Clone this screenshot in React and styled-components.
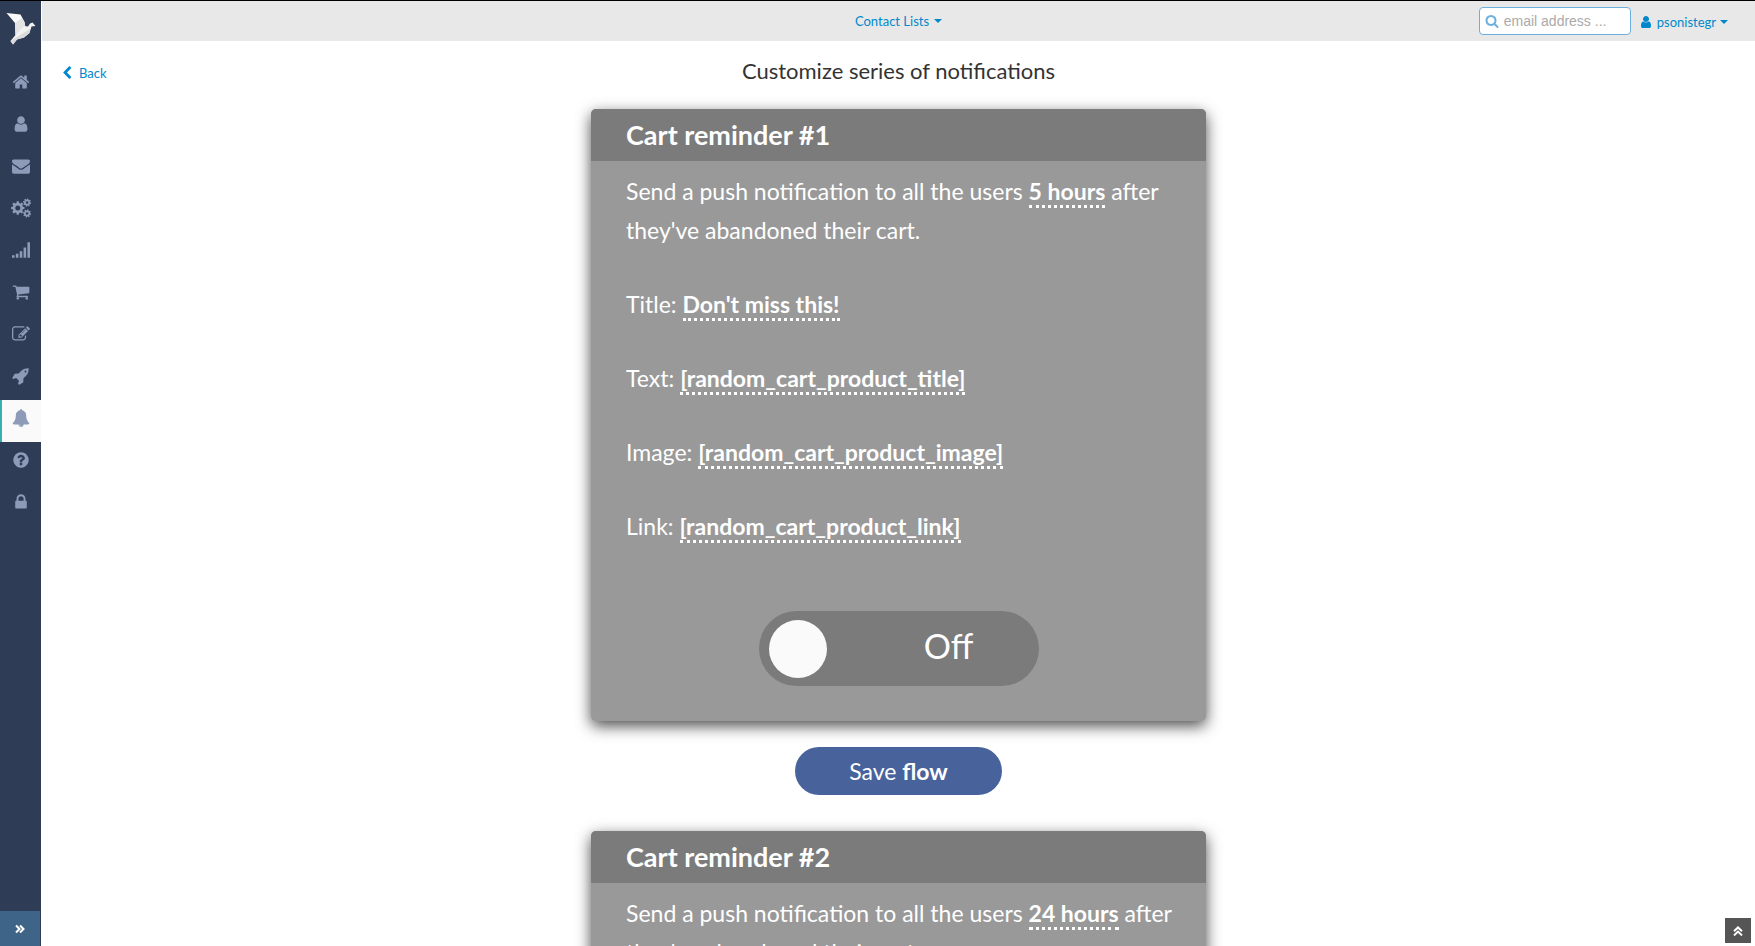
import React from "react";
import styled, { createGlobalStyle, css } from "styled-components";

const GlobalStyle = createGlobalStyle`
  *, *::before, *::after { box-sizing: border-box; }
  body {
    margin: 0;
    background: #fff;
    color: #333;
    font-family: Lato, "Liberation Sans", sans-serif;
    font-size: 13px;
  }
`;

/* ---------- icons ---------- */

const Glyph = styled.svg`
  display: block;
  flex: none;
  width: ${(p) => p.$size}px;
  height: ${(p) => p.$size}px;
  fill: currentColor;
`;

const PATHS = {
  home: "M1472 992v480q0 26-19 45t-45 19h-384v-384h-256v384h-384q-26 0-45-19t-19-45v-480q0-1 .5-3t.5-3l575-474 575 474q1 2 1 6zm223-69l-62 74q-8 9-21 11h-3q-13 0-21-7l-692-577-692 577q-12 8-24 7-13-2-21-11l-62-74q-8-10-7-23.5t11-21.5l719-599q32-26 76-26t76 26l244 204v-195q0-14 9-23t23-9h192q14 0 23 9t9 23v408l219 182q10 8 11 21.5t-7 23.5z",
  user: "M1536 1399q0 109-62.5 187t-150.5 78h-854q-88 0-150.5-78t-62.5-187q0-85 8.5-160.5t31.5-152 58.5-131 94-89 134.5-34.5q131 128 313 128t313-128q76 0 134.5 34.5t94 89 58.5 131 31.5 152 8.5 160.5zm-256-887q0 159-112.5 271.5t-271.5 112.5-271.5-112.5-112.5-271.5 112.5-271.5 271.5-112.5 271.5 112.5 112.5 271.5z",
  envelope: "M1792 710v794q0 66-47 113t-113 47h-1472q-66 0-113-47t-47-113v-794q44 49 101 87 362 246 497 345 57 42 92.5 65.5t94.5 48 110 24.5h2q51 0 110-24.5t94.5-48 92.5-65.5q170-123 498-345 57-39 100-87zm0-294q0 79-49 151t-122 123q-376 261-468 325-10 7-42.5 31t-54 38.5-52 32.5-57.5 27-50 9h-2q-23 0-50-9t-57.5-27-52-32.5-54-38.5-42.5-31q-91-64-262-182.5t-205-142.5q-62-42-117-115.5t-55-136.5q0-78 41.5-130t118.5-52h1472q65 0 112.5 47t47.5 113z",
  signal: "M0 1408h256v256h-256zM384 1280h256v384h-256zM768 1024h256v640h-256zM1152 640h256v1024h-256zM1536 128h256v1536h-256z",
  cart: "M704 1536q0 52-38 90t-90 38-90-38-38-90 38-90 90-38 90 38 38 90zm896 0q0 52-38 90t-90 38-90-38-38-90 38-90 90-38 90 38 38 90zm128-1088v512q0 24-16.5 42.5t-40.5 21.5l-1044 122q13 60 13 70 0 16-24 64h920q26 0 45 19t19 45-19 45-45 19h-1024q-26 0-45-19t-19-45q0-11 8-31.5t16-36 21.5-40 15.5-29.5l-177-823h-204q-26 0-45-19t-19-45 19-45 45-19h256q16 0 28.5 6.5t19.5 15.5 13 24.5 8 26 5.5 29.5 4.5 26h1201q26 0 45 19t19 45z",
  edit: "M888 1184l116-116-152-152-116 116v56h96v96h56zm440-720q-16-16-33 1l-350 350q-17 17-1 33t33-1l350-350q17-17 1-33zm80 594v190q0 119-84.5 203.5t-203.5 84.5h-832q-119 0-203.5-84.5t-84.5-203.5v-832q0-119 84.5-203.5t203.5-84.5h832q63 0 117 25 15 7 18 23 3 17-9 29l-49 49q-14 14-32 8-23-6-45-6h-832q-66 0-113 47t-47 113v832q0 66 47 113t113 47h832q66 0 113-47t47-113v-126q0-13 9-22l64-64q15-15 35-7t20 29zm-96-738l288 288-672 672h-288v-288zm444 132l-92 92-288-288 92-92q28-28 68-28t68 28l152 152q28 28 28 68t-28 68z",
  rocket: "M1440 448q0-40-28-68t-68-28-68 28-28 68 28 68 68 28 68-28 28-68zm224-288q0 249-75.5 430.5t-253.5 360.5q-81 80-195 176l-20 379q-2 16-16 26l-384 224q-7 4-16 4-12 0-23-9l-64-64q-13-14-8-32l85-276-281-281-276 85q-3 1-9 1-14 0-23-9l-64-64q-17-19-5-39l224-384q10-14 26-16l379-20q96-114 176-195 188-187 358-258t431-71q14 0 24 9.5t10 22.5z",
  bell: "M912 1696q0-16-16-16-59 0-101.5-42.5t-42.5-101.5q0-16-16-16t-16 16q0 73 51.5 124.5t124.5 51.5q16 0 16-16zm816-288q0 52-38 90t-90 38h-448q0 106-75 181t-181 75-181-75-75-181h-448q-52 0-90-38t-38-90q50-42 91-88t85-119.5 74.5-158.5 50-206 19.5-260q0-152 117-282.5t307-158.5q-8-19-8-39 0-40 28-68t68-28 68 28 28 68q0 20-8 39 190 28 307 158.5t117 282.5q0 139 19.5 260t50 206 74.5 158.5 85 119.5 91 88z",
  help: "M1024 1376v-192q0-14-9-23t-23-9h-192q-14 0-23 9t-9 23v192q0 14 9 23t23 9h192q14 0 23-9t9-23zm256-672q0-88-55.5-163t-138.5-116-170-41q-243 0-371 213-15 24 8 42l132 100q7 6 19 6 16 0 25-12 53-68 86-92 34-24 86-24 48 0 85.5 26t37.5 59q0 38-20 61t-68 45q-63 28-115.5 86.5t-52.5 125.5v36q0 14 9 23t23 9h192q14 0 23-9t9-23q0-19 21.5-49.5t54.5-49.5q32-18 49-28.5t46-35 44.5-48 28-60.5 12.5-81zm384 192q0 209-103 385.5t-279.5 279.5-385.5 103-385.5-103-279.5-279.5-103-385.5 103-385.5 279.5-279.5 385.5-103 385.5 103 279.5 279.5 103 385.5z",
  lock: "M640 768h512v-192q0-106-75-181t-181-75-181 75-75 181v192zm832 96v576q0 40-28 68t-68 28h-960q-40 0-68-28t-28-68v-576q0-40 28-68t68-28h32v-192q0-184 132-316t316-132 316 132 132 316v192h32q40 0 68 28t28 68z",
  search: "M1216 832q0-185-131.5-316.5t-316.5-131.5-316.5 131.5-131.5 316.5 131.5 316.5 316.5 131.5 316.5-131.5 131.5-316.5zm512 832q0 52-38 90t-90 38q-54 0-90-38l-343-342q-179 124-399 124-143 0-273.5-55.5t-225-150-150-225-55.5-273.5 55.5-273.5 150-225 225-150 273.5-55.5 273.5 55.5 225 150 150 225 55.5 273.5q0 220-124 399l343 343q37 37 37 90z",
  back: "M1427 301l-531 531 531 531q19 19 19 45t-19 45l-166 166q-19 19-45 19t-45-19l-742-742q-19-19-19-45t19-45l742-742q19-19 45-19t45 19l166 166q19 19 19 45t-19 45z",
};

/* A toothed wheel with a round hole, as an even-odd path. */
const gear = (cx, cy, outer, inner, hole, teeth = 8, turn = 0) => {
  const step = (Math.PI * 2) / teeth;
  const at = (r, a) =>
    `${Math.round(cx + r * Math.cos(a))} ${Math.round(cy + r * Math.sin(a))}`;
  const points = [];
  for (let i = 0; i < teeth; i += 1) {
    const a = i * step + turn;
    points.push(
      at(inner, a - step * 0.32),
      at(outer, a - step * 0.2),
      at(outer, a + step * 0.2),
      at(inner, a + step * 0.32)
    );
  }
  return `M${points.join("L")}ZM${cx - hole} ${cy}a${hole} ${hole} 0 1 0 ${hole * 2} 0a${hole} ${hole} 0 1 0 ${-hole * 2} 0Z`;
};

PATHS.gears = [
  gear(576, 896, 680, 520, 250),
  gear(1500, 350, 410, 310, 130, 8, 0.2),
  gear(1500, 1442, 410, 310, 130, 8, 0.2),
].join("");

const Icon = ({ name, size = 18 }) => (
  <Glyph $size={size} viewBox="0 0 1792 1792" overflow="visible" fillRule="evenodd" aria-hidden="true">
    <path d={PATHS[name]} />
  </Glyph>
);

const DoubleChevronSvg = styled.svg`
  display: block;
  width: 10px;
  height: 10px;
  fill: none;
  stroke: currentColor;
  stroke-width: 2;
`;

const DoubleChevron = ({ up }) => (
  <DoubleChevronSvg viewBox="0 0 10 10" aria-hidden="true">
    <path d={up ? "M1 5.2 5 1.4 9 5.2M1 9.4 5 5.6 9 9.4" : "M1 1.500 4.500 5 1 8.500M5 1.500 8.500 5 5 8.500"} />
  </DoubleChevronSvg>
);

const Caret = styled.span`
  border: 4px solid transparent;
  border-top-color: currentColor;
  border-bottom: 0;
`;

/* ---------- sidebar ---------- */

const Shell = styled.div`
  display: flex;
  height: 100vh;
  border-top: 1px solid #000;
  overflow: hidden;
`;

const Sidebar = styled.nav`
  display: flex;
  flex-direction: column;
  flex: none;
  width: 41px;
  background: #2f3c56;
`;

const LogoLink = styled.a`
  display: block;
  height: 63px;
  padding: 10px 0 0 4px;
`;

const LogoSvg = styled.svg`
  display: block;
  width: 34px;
  height: 36px;
`;

const NavLink = styled.a`
  display: flex;
  justify-content: center;
  height: 42px;
  padding-top: 9px;
  color: #8d9bb8;
  ${(p) =>
    p.$active &&
    css`
      background: #fafafa;
      box-shadow: inset 2px 0 #36b0b0;
    `}
`;

const ExpandButton = styled.button`
  display: flex;
  align-items: center;
  justify-content: center;
  width: 40px;
  height: 35px;
  margin-top: auto;
  padding: 0;
  border: 0;
  background: #3e6588;
  color: #fff;
`;

/* ---------- top bar ---------- */

const Page = styled.div`
  display: flex;
  flex-direction: column;
  flex: 1;
  min-width: 0;
  border-left: 1px solid #fff;
`;

const TopBar = styled.header`
  display: grid;
  grid-template-columns: 1fr auto 1fr;
  align-items: center;
  flex: none;
  height: 40px;
  padding: 0 27px;
  background: #e8e8e8;
`;

const TextLink = styled.a`
  display: inline-flex;
  align-items: center;
  gap: ${(p) => p.$gap}px;
  color: #08c;
  font-size: 13px;
  line-height: 20px;
  text-decoration: none;
`;

const MenuLink = styled(TextLink)`
  grid-column: 2;
`;

const AccountLink = styled(TextLink)`
  padding-top: 2px;
`;

const Account = styled.div`
  display: flex;
  align-items: center;
  justify-content: flex-end;
  gap: 8px;
`;

const SearchBox = styled.label`
  display: flex;
  align-items: center;
  gap: 5px;
  width: 152px;
  height: 28px;
  padding: 0 5px;
  border: 1px solid #6cb0de;
  border-radius: 4px;
  background: #fff;
  color: #6cb0de;
`;

const SearchInput = styled.input`
  flex: 1;
  min-width: 0;
  padding: 0;
  border: 0;
  outline: 0;
  background: none;
  color: #555;
  font: 14px/20px "Liberation Sans", sans-serif;
  &::placeholder { color: #aaa; }
`;

/* ---------- content ---------- */

const Content = styled.main`
  flex: 1;
  min-height: 0;
  overflow-y: auto;
  scrollbar-width: none;
`;

const TitleRow = styled.div`
  display: grid;
  grid-template-columns: 1fr auto 1fr;
  align-items: center;
  height: 60px;
  margin-bottom: 8px;
  padding: 0 18px;
`;

const BackLink = styled(TextLink)`
  justify-self: start;
  padding-top: 4px;
`;

const PageTitle = styled.h1`
  margin: 0;
  color: #333;
  font-size: 22px;
  font-weight: 400;
  line-height: 30px;
`;

const Flow = styled.div`
  display: flex;
  flex-direction: column;
  align-items: center;
`;

const Card = styled.section`
  width: 100%;
  max-width: 615px;
  border-radius: 5px;
  background: #999;
  box-shadow: 0 5px 15px rgba(0, 0, 0, 0.7);
  color: #fff;
`;

const CardTitle = styled.h2`
  margin: 0;
  padding: 0 35px;
  border-radius: 5px 5px 0 0;
  background: #7b7b7b;
  font-size: 27px;
  font-weight: 700;
  line-height: 52px;
`;

const CardBody = styled.div`
  padding: 11px 24px 35px 35px;
`;

const Line = styled.p`
  margin: 0 0 35px;
  font-size: 23px;
  line-height: 39px;
`;

const Editable = styled.a`
  border-bottom: 3px dotted #fff;
  color: #fff;
  font-weight: 700;
  text-decoration: none;
`;

const SwitchRow = styled.div`
  display: flex;
  justify-content: center;
  padding: 30px 11px 0 0;
`;

const Switch = styled.label`
  display: flex;
  align-items: center;
  width: 280px;
  height: 75px;
  padding: 0 10px;
  border-radius: 38px;
  background: #7b7b7b;
`;

const SwitchInput = styled.input`
  appearance: none;
  flex: none;
  width: 58px;
  height: 58px;
  margin: 0;
  border-radius: 50%;
  background: #fafafa;
`;

const SwitchText = styled.span`
  flex: 1;
  padding: 0 0 5px 42px;
  font-size: 34px;
  line-height: 40px;
  text-align: center;
`;

const SaveButton = styled.button`
  width: 207px;
  height: 48px;
  margin: 26px 0 36px;
  padding: 0;
  border: 0;
  border-radius: 24px;
  background: #48629c;
  color: #fff;
  font: 23px/30px Lato, sans-serif;
`;

const ScrollTop = styled.button`
  position: fixed;
  right: 4px;
  bottom: 3px;
  display: flex;
  align-items: center;
  justify-content: center;
  width: 26px;
  height: 25px;
  padding: 0;
  border: 0;
  background: #555;
  color: #fff;
`;

const NAV = [
  ["home", "Home"],
  ["user", "Contacts"],
  ["envelope", "Campaigns"],
  ["gears", "Automation"],
  ["signal", "Reports"],
  ["cart", "Shop"],
  ["edit", "Forms"],
  ["rocket", "Landing pages"],
  ["bell", "Push notifications"],
  ["help", "Help"],
  ["lock", "Security"],
];

const REMINDERS = [
  { number: 1, delay: "5 hours" },
  { number: 2, delay: "24 hours" },
];

const FIELDS = [
  ["Title", "Don't miss this!"],
  ["Text", "[random_cart_product_title]"],
  ["Image", "[random_cart_product_image]"],
  ["Link", "[random_cart_product_link]"],
];

const Logo = () => (
  <LogoSvg viewBox="4 11 34 36" aria-hidden="true">
    <path fill="#fafafa" d="M6.500 13 20.500 14.500 24.500 22 25.500 28 15.500 35.500 15 23Z" />
    <path fill="#e4e4e4" d="M15 23 22 18 24.500 22 25.500 28 15.500 35.500Z" />
    <path fill="#f2f2f2" d="M15.500 35 24 26 28 26.500 30 23.500 32.500 22.500 35.500 26 31.500 26.500 29.500 33 24 37.500 17 39.500 13 44.500 10.500 41Z" />
    <path fill="#dadada" d="M24 37.500 29.500 33 30 29 17 37 10.500 41 13 44.500 17 39.500Z" />
  </LogoSvg>
);

const Reminder = ({ number, delay }) => (
  <>
    <Card>
      <CardTitle>Cart reminder #{number}</CardTitle>
      <CardBody>
        <Line>
          Send a push notification to all the users <Editable href="#delay">{delay}</Editable> after
          they've abandoned their cart.
        </Line>
        {FIELDS.map(([label, value]) => (
          <Line key={label}>
            {label}: <Editable href={`#${label.toLowerCase()}`}>{value}</Editable>
          </Line>
        ))}
        <SwitchRow>
          <Switch>
            <SwitchInput type="checkbox" role="switch" />
            <SwitchText>Off</SwitchText>
          </Switch>
        </SwitchRow>
      </CardBody>
    </Card>
    <SaveButton type="button">
      Save <b>flow</b>
    </SaveButton>
  </>
);

export default function App() {
  return (
    <>
      <GlobalStyle />
      <Shell>
        <Sidebar>
          <LogoLink href="#top" aria-label="Dashboard">
            <Logo />
          </LogoLink>
          {NAV.map(([icon, label]) => (
            <NavLink key={icon} href={`#${icon}`} aria-label={label} $active={icon === "bell"}>
              <Icon name={icon} />
            </NavLink>
          ))}
          <ExpandButton type="button" aria-label="Expand menu">
            <DoubleChevron />
          </ExpandButton>
        </Sidebar>
        <Page>
          <TopBar>
            <MenuLink href="#lists" $gap={5}>
              Contact Lists <Caret />
            </MenuLink>
            <Account>
              <SearchBox>
                <Icon name="search" size={14} />
                <SearchInput type="text" placeholder="email address ..." aria-label="Email address" />
              </SearchBox>
              <AccountLink href="#account" $gap={4}>
                <Icon name="user" size={14} />
                psonistegr <Caret />
              </AccountLink>
            </Account>
          </TopBar>
          <Content>
            <TitleRow>
              <BackLink href="#back" $gap={5}>
                <Icon name="back" size={14} />
                Back
              </BackLink>
              <PageTitle>Customize series of notifications</PageTitle>
            </TitleRow>
            <Flow>
              {REMINDERS.map((r) => (
                <Reminder key={r.number} {...r} />
              ))}
            </Flow>
          </Content>
        </Page>
        <ScrollTop type="button" aria-label="Scroll to top">
          <DoubleChevron up />
        </ScrollTop>
      </Shell>
    </>
  );
}
